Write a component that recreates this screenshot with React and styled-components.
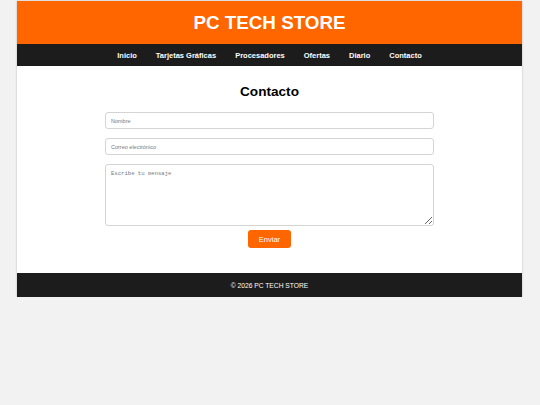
import styled, { createGlobalStyle } from "styled-components";

const GlobalStyle = createGlobalStyle`
  html, body {
    margin: 0;
    padding: 0;
    background: #f2f2f2;
    font-family: "Liberation Sans", Arial, sans-serif;
  }
`;

const Page = styled.div`
  width: 505px;
  margin: 1px auto 0 17px;
  background: #fff;
  box-shadow: 0 0 2px rgba(0, 0, 0, 0.25);
`;

const Header = styled.header`
  background: #ff6600;
  height: 43px;
  display: flex;
  align-items: center;
  justify-content: center;

  h1 {
    margin: 0;
    color: #fff;
    font-size: 18.8px;
    font-weight: 700;
  }
`;

const Nav = styled.nav`
  background: #1c1c1c;
  height: 22px;
  display: flex;
  align-items: center;
  justify-content: center;
  gap: 19px;

  a {
    color: #fff;
    font-size: 7.5px;
    font-weight: 700;
    text-decoration: none;
  }
`;

const Main = styled.main`
  padding: 18px 88px 25px;
  display: flex;
  flex-direction: column;
  align-items: center;

  h2 {
    margin: 0 0 13px;
    font-size: 13.6px;
    font-weight: 700;
    color: #000;
  }
`;

const Form = styled.form`
  width: 100%;
  display: flex;
  flex-direction: column;
  align-items: center;
  gap: 9px;
`;

const Field = styled.input`
  box-sizing: border-box;
  width: 100%;
  height: 17px;
  padding: 0 5px;
  border: 1px solid #d4d4d4;
  border-radius: 3px;
  font-family: "Liberation Sans", Arial, sans-serif;
  font-size: 5.5px;
  outline: none;

  &::placeholder {
    color: #777;
  }
`;

const Message = styled.textarea`
  box-sizing: border-box;
  display: block;
  width: 100%;
  height: 62px;
  padding: 5px;
  border: 1px solid #d4d4d4;
  border-radius: 3px;
  font-family: "Liberation Mono", monospace;
  font-size: 5.6px;
  outline: none;
  resize: vertical;

  &::placeholder {
    color: #777;
  }
`;

const Button = styled.button`
  margin-top: -5px;
  width: 43px;
  height: 18px;
  border: none;
  border-radius: 3px;
  background: #ff6600;
  color: #fff;
  font-family: "Liberation Sans", Arial, sans-serif;
  font-size: 7.5px;
`;

const Footer = styled.footer`
  background: #1c1c1c;
  height: 24px;
  display: flex;
  align-items: center;
  justify-content: center;
  color: #fff;
  font-size: 6.7px;
`;

const links = ["Inicio", "Tarjetas Gráficas", "Procesadores", "Ofertas", "Diario", "Contacto"];

const App = () => {
  return (
    <>
      <GlobalStyle />
      <Page>
        <Header>
          <h1>PC TECH STORE</h1>
        </Header>
        <Nav>
          {links.map((l) => (
            <a href="#" key={l}>
              {l}
            </a>
          ))}
        </Nav>
        <Main>
          <h2>Contacto</h2>
          <Form onSubmit={(e) => e.preventDefault()}>
            <Field type="text" placeholder="Nombre" />
            <Field type="email" placeholder="Correo electrónico" />
            <Message placeholder="Escribe tu mensaje" />
            <Button type="submit">Enviar</Button>
          </Form>
        </Main>
        <Footer>© 2026 PC TECH STORE</Footer>
      </Page>
    </>
  );
};

export default App;
